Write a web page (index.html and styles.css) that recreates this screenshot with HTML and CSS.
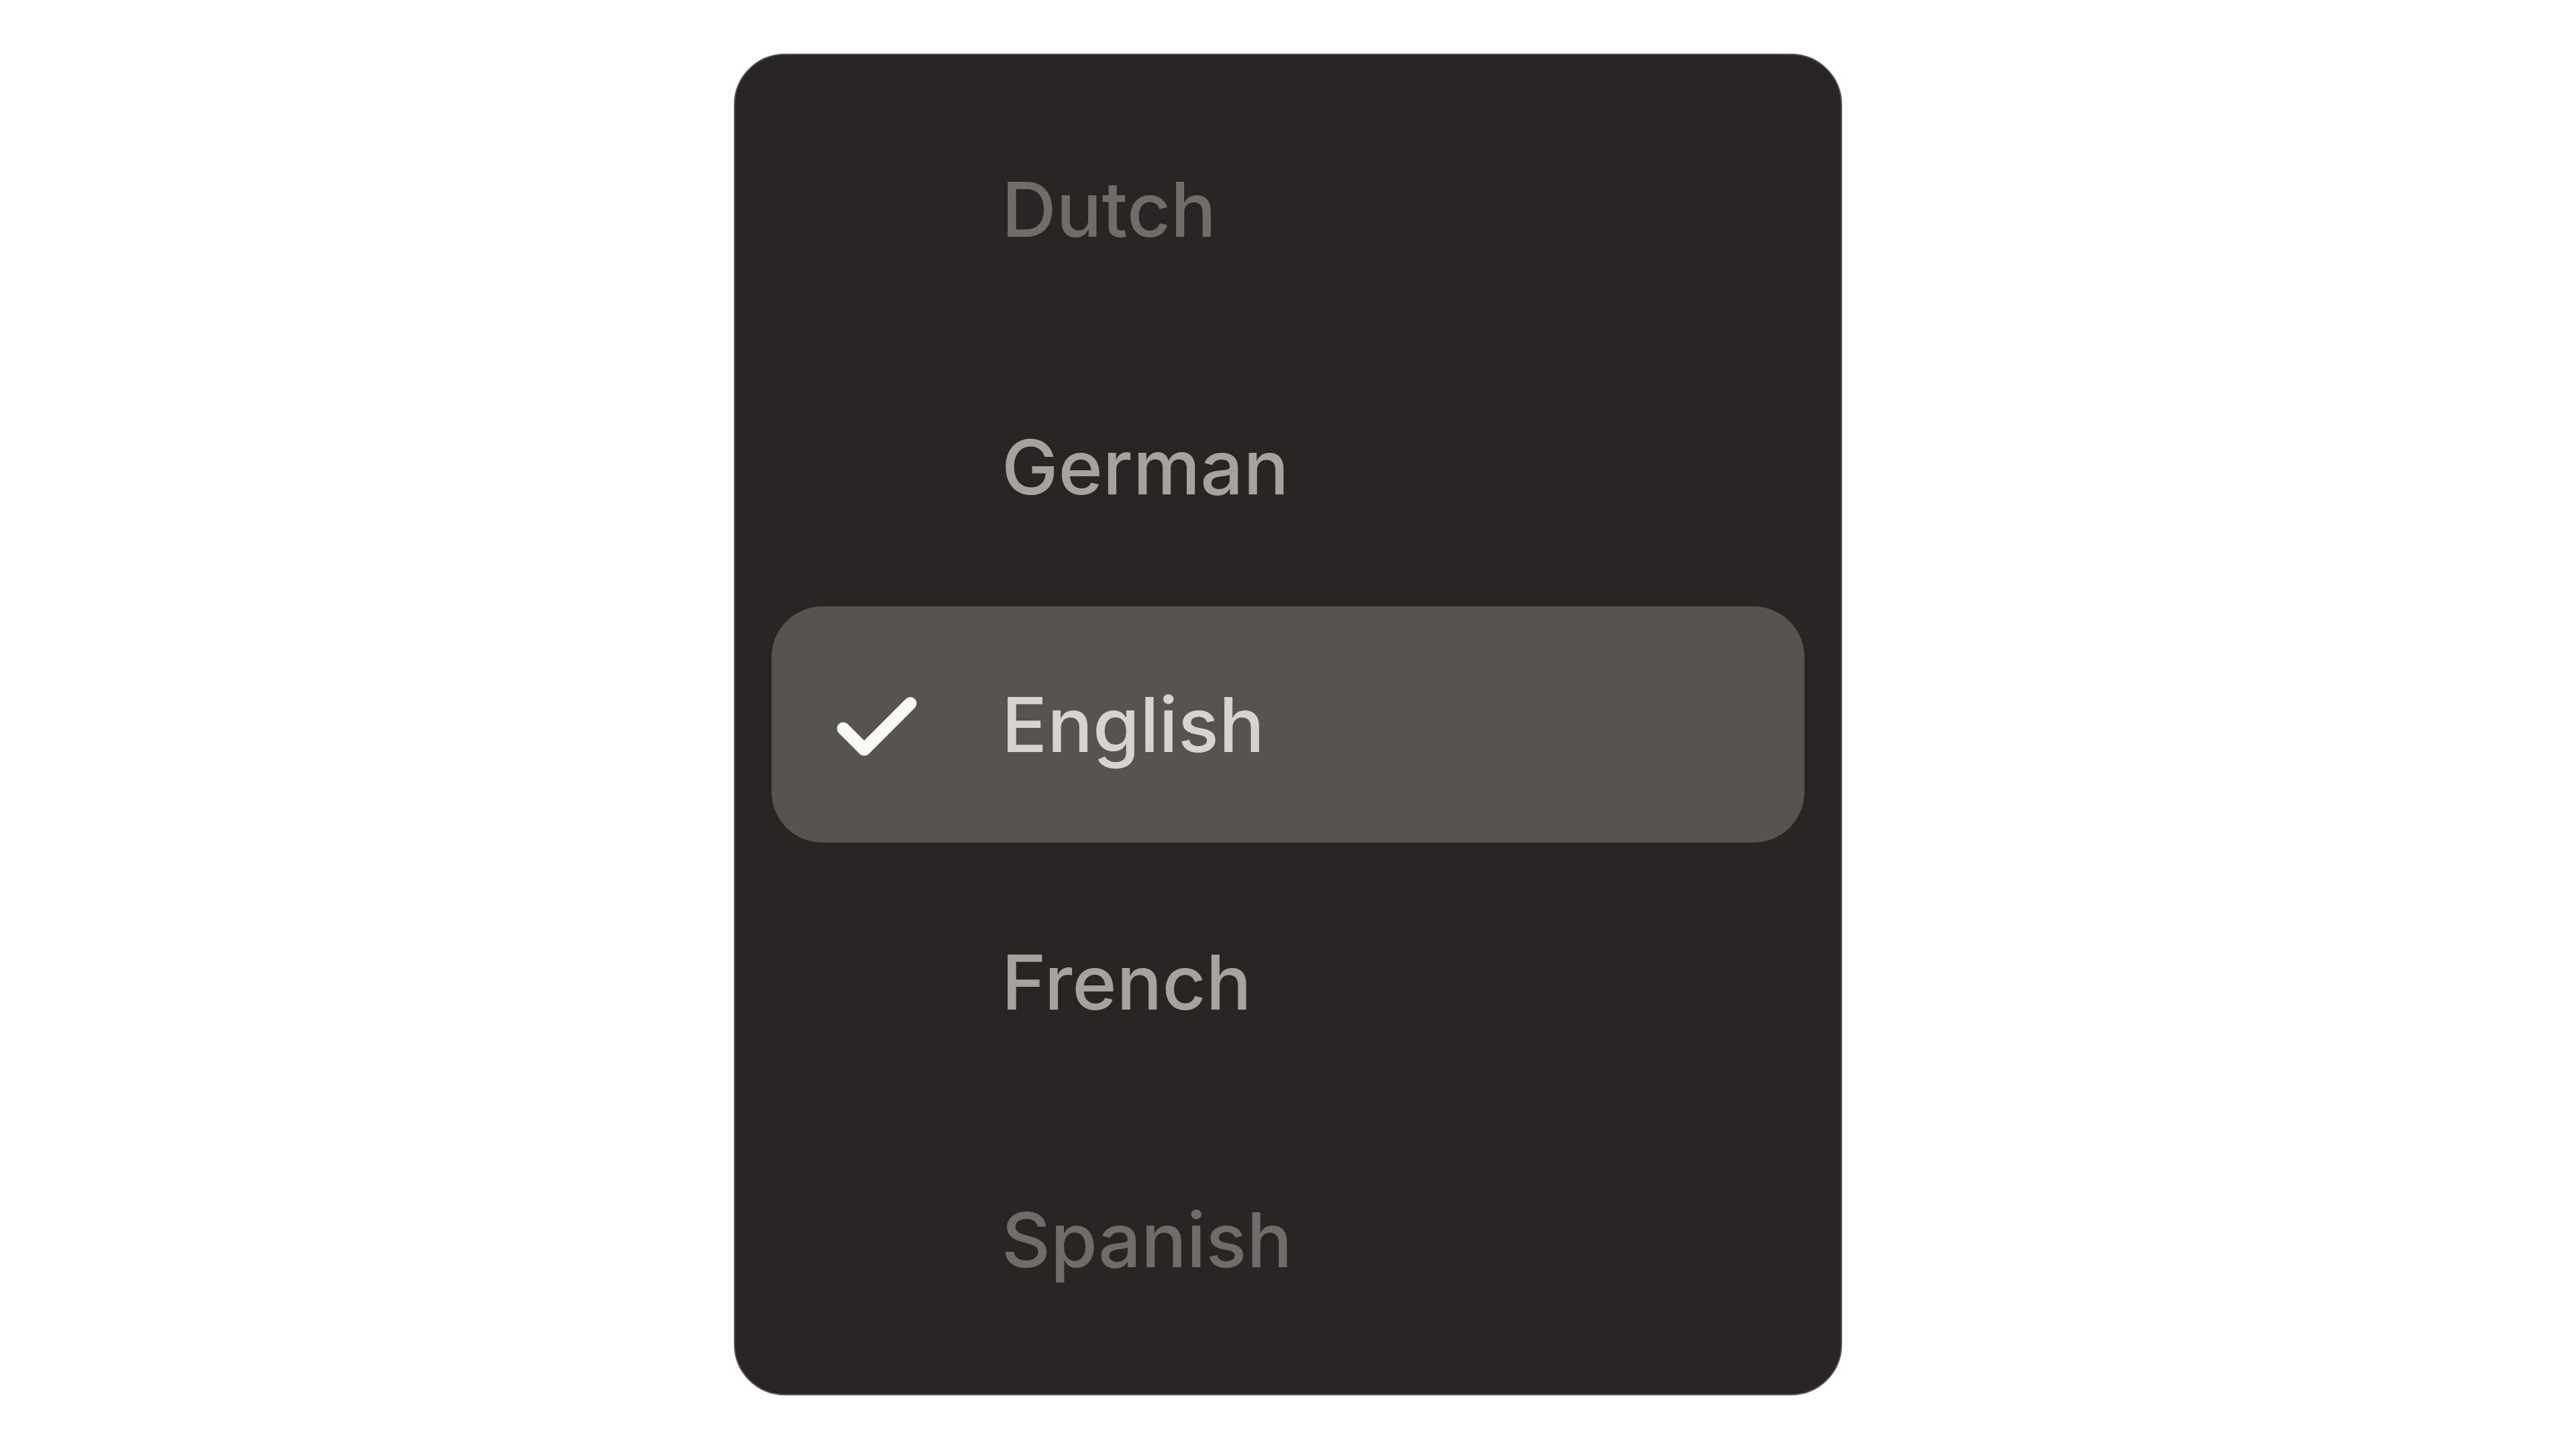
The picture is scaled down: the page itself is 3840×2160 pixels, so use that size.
FILE: index.html
```html
<!DOCTYPE html>
<html lang="en">
<head>
    <meta charset="UTF-8">
    <meta name="viewport" content="width=device-width, initial-scale=1.0">
    <title>Language Picker</title>
    <link rel="stylesheet" href="styles.css">
</head>
<body>

<div class="picker">
    <div class="option faded"><span class="tick"></span><span class="label">Dutch</span></div>
    <div class="option"><span class="tick"></span><span class="label">German</span></div>
    <div class="option selected">
        <span class="tick">
            <svg viewBox="0 0 24 24" fill="none" stroke="currentColor" stroke-width="3" stroke-linecap="round" stroke-linejoin="round">
                <path d="M20 6 9 17l-5-5"/>
            </svg>
        </span>
        <span class="label">English</span>
    </div>
    <div class="option"><span class="tick"></span><span class="label">French</span></div>
    <div class="option faded"><span class="tick"></span><span class="label">Spanish</span></div>
</div>

</body>
</html>
```

FILE: styles.css
```css
body {
    margin: 0;
    min-height: 100vh;
    display: flex;
    align-items: center;
    justify-content: center;
    background-color: #ffffff;
    font-family: Inter, "Noto Sans", sans-serif;
}
.picker {
    width: 1652px;
    box-sizing: border-box;
    padding: 54px;
    display: flex;
    flex-direction: column;
    gap: 32px;
    background-color: #292524;
    border: 2px solid #57534e;
    border-radius: 76px;
}
.option {
    height: 352px;
    display: flex;
    align-items: center;
    padding-left: 82px;
    border-radius: 76px;
    color: #a8a29e;
    font-size: 113px;
    font-weight: 500;
}
.option.faded {
    color: #716c69;
}
.option.selected {
    background-color: #57534e;
    color: #d6d3d1;
}
.tick {
    width: 150px;
    height: 150px;
    margin-right: 111px;
    color: #fafaf9;
    flex-shrink: 0;
}
.tick svg {
    display: block;
    width: 150px;
    height: 150px;
    margin-top: 6px;
}
```
